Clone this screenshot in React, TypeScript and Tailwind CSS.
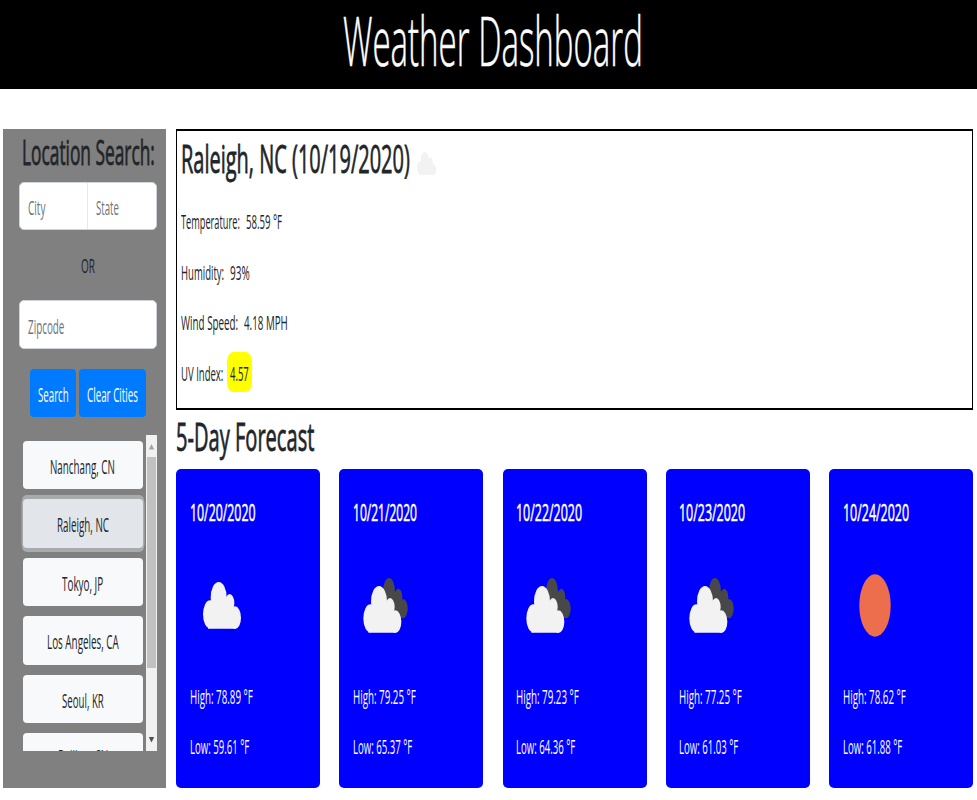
import { useLayoutEffect, useRef, useState } from "react";

type FitProps = { text: string; width: number; className?: string };

/** A single line of text condensed horizontally to a given width. */
function Fit({ text, width, className = "" }: FitProps) {
  const ref = useRef<HTMLSpanElement>(null);
  const [scale, setScale] = useState(0.6);
  useLayoutEffect(() => {
    if (ref.current) setScale(width / ref.current.offsetWidth);
  }, [text, width]);
  return (
    <span className={`block shrink-0 whitespace-pre ${className}`} style={{ width }}>
      <span ref={ref} className="inline-block origin-left align-top" style={{ transform: `scaleX(${scale})` }}>
        {text}
      </span>
    </span>
  );
}

function FrontCloud() {
  return (
    <g fill="#f2f2f2">
      <ellipse cx="60" cy="160" rx="21" ry="42" />
      <ellipse cx="86" cy="110" rx="24" ry="47" />
      <ellipse cx="119" cy="126" rx="14" ry="27" />
      <ellipse cx="135" cy="170" rx="18" ry="34" />
      <path d="M60 120H120V138L137 160V203H54Z" />
    </g>
  );
}

function Cloud({ className }: { className: string }) {
  return (
    <svg className={className} viewBox="39 63 114 141" preserveAspectRatio="none">
      <FrontCloud />
    </svg>
  );
}

function BrokenClouds() {
  return (
    <svg className="ml-[9.75px] mt-[13px] h-[55px] w-[45px]" viewBox="38 39 135 165" preserveAspectRatio="none">
      <g fill="#484848">
        <ellipse cx="116" cy="80" rx="18" ry="41" />
        <ellipse cx="144" cy="97" rx="12" ry="26" />
        <ellipse cx="158" cy="131" rx="14" ry="29" />
        <path d="M116 80H145V120H158V159L116 150Z" />
      </g>
      <FrontCloud />
    </svg>
  );
}

function Sun() {
  return (
    <svg className="ml-[16.5px] mt-[9px] h-[63px] w-[32px]" viewBox="0 0 32 63">
      <ellipse cx="16" cy="31.5" rx="15.7" ry="31.2" fill="#ec6e4c" />
    </svg>
  );
}

const cities = [
  { name: "Nanchang, CN", width: 65 },
  { name: "Raleigh, NC", width: 52, active: true },
  { name: "Tokyo, JP", width: 41 },
  { name: "Los Angeles, CA", width: 72 },
  { name: "Seoul, KR", width: 42 },
  { name: "Beijing, CN", width: 50, last: true },
];

const days = [
  { date: "10/20/2020", icon: "cloud", high: "78.89", low: "59.61", w: 65.5 },
  { date: "10/21/2020", icon: "broken", high: "79.25", low: "65.37", w: 64 },
  { date: "10/22/2020", icon: "broken", high: "79.23", low: "64.36", w: 66 },
  { date: "10/23/2020", icon: "broken", high: "77.25", low: "61.03", w: 66 },
  { date: "10/24/2020", icon: "sun", high: "78.62", low: "61.88", w: 66 },
];

function Sidebar() {
  return (
    <aside className="flex h-[658.5px] w-[163px] flex-col bg-[#808080]">
      <Fit
        text="Location Search:"
        width={133}
        className="ml-[18.5px] h-[53px] text-[34px] leading-[46px] [-webkit-text-stroke:0.8px_#212529]"
      />
      <div className="ml-4 flex h-12 w-[138px] overflow-hidden rounded-[5px] border border-[#ced4da] bg-white text-[#6c757d]">
        <div className="flex w-[68px] border-r border-[#e6e9ec] pl-[7.5px]">
          <Fit text="City" width={17.5} className="leading-[49px]" />
        </div>
        <div className="flex pl-2">
          <Fit text="State" width={23} className="leading-[49px]" />
        </div>
      </div>
      <Fit text="OR" width={14} className="ml-[78px] h-[70px] leading-[72px]" />
      <div className="ml-4 h-[49px] w-[138px] rounded-[5px] border border-[#ced4da] bg-white pl-[7.5px] text-[#6c757d]">
        <Fit text="Zipcode" width={36.5} className="leading-[52px]" />
      </div>
      <div className="ml-[26.5px] mt-[19.5px] flex gap-[3px] text-white">
        <button className="flex h-12 w-[46.5px] justify-center rounded-[4px] bg-[#007bff]">
          <Fit text="Search" width={30.5} className="leading-[51px]" />
        </button>
        <button className="flex h-12 w-[66.5px] justify-center rounded-[4px] bg-[#007bff]">
          <Fit text="Clear Cities" width={51} className="leading-[51px]" />
        </button>
      </div>
      <div className="ml-4 mt-[18.5px] flex h-[316px] w-[138px] justify-between overflow-hidden">
        <div className="flex flex-col gap-[10px] pl-[3.5px] pt-[6px]">
          {cities.map((c) => (
            <button
              key={c.name}
              className={`flex h-[48.4px] w-[120.5px] shrink-0 justify-center rounded-[4px] ${
                c.active ? "bg-[#e2e6ea] shadow-[0_0_0_1.5px_#a9aaab,0_3px_0_1px_#a9aaab,0_-3px_0_1px_#a9aaab]" : "bg-[#f8f9fa]"
              }`}
            >
              <Fit text={c.name} width={c.width} className={c.last ? "leading-[47px]" : "leading-[51px]"} />
            </button>
          ))}
        </div>
        <div className="flex w-[11px] flex-col items-center bg-[#f1f1f1]">
          <svg className="h-[21.5px] w-[11px]" viewBox="0 0 11 21.5">
            <path d="M2.8 14.5L5.5 9L8.2 14.5Z" fill="#a3a3a3" />
          </svg>
          <div className="h-[211px] w-[9px] bg-[#c1c1c1]" />
          <svg className="mt-[61px] h-[22px] w-[11px]" viewBox="0 0 11 22">
            <path d="M2.8 8L8.2 8L5.5 13.5Z" fill="#505050" />
          </svg>
        </div>
      </div>
    </aside>
  );
}

function Stat({ label, value, lw, vw, gap }: { label: string; value: string; lw: number; vw: number; gap: string }) {
  return (
    <div className={`flex h-[50.6px] leading-[52px] ${gap}`}>
      <Fit text={label} width={lw} />
      <Fit text={value} width={vw} />
    </div>
  );
}

export default function App() {
  return (
    <div className="h-[800px] w-[977px] bg-white font-['Open_Sans','Noto_Sans',sans-serif] text-[20px] text-[#212529]">
      <header className="flex h-[89px] justify-center bg-black pl-[8px] text-white">
        <Fit
          text="Weather Dashboard"
          width={300}
          className="text-[69px] font-light leading-[78px] [-webkit-text-stroke:0.6px_white]"
        />
      </header>
      <div className="flex gap-[10px] pl-[3px] pt-10">
        <Sidebar />
        <main className="w-[797px]">
          <section className="h-[281px] border-x border-y-2 border-black pl-[3.5px]">
            <div className="flex h-[65px]">
              <Fit
                text="Raleigh, NC (10/19/2020)"
                width={229}
                className="text-[39px] leading-[54px] [-webkit-text-stroke:0.8px_#212529]"
              />
              <Cloud className="ml-[7px] mt-[21px] h-[23px] w-[19px]" />
            </div>
            <Stat label="Temperature:" value="58.59 °F" lw={59} vw={36} gap="gap-[6px]" />
            <Stat label="Humidity:" value="93%" lw={43} vw={19.5} gap="gap-[6px]" />
            <Stat label="Wind Speed:" value="4.18 MPH" lw={57} vw={44} gap="gap-[6px]" />
            <div className="flex h-[50px] gap-[3.5px]">
              <Fit text="UV Index:" width={42.5} className="leading-[52px]" />
              <div className="mt-[4px] flex h-10 w-[25.5px] justify-center rounded-[6px/10px] bg-[yellow]">
                <Fit text="4.57" width={19} className="leading-[44px]" />
              </div>
            </div>
          </section>
          <Fit
            text="5-Day Forecast"
            width={138.5}
            className="h-[58.5px] text-[39px] leading-[51px] [-webkit-text-stroke:0.8px_#212529]"
          />
          <section className="flex justify-between">
            {days.map((d) => (
              <article key={d.date} className="h-[319px] w-[144px] rounded-[5px] bg-[#0000ff] pl-[13.5px] pt-[18px] text-white">
                <Fit text={d.date} width={d.w} className="text-[24.5px] leading-[50px] [-webkit-text-stroke:0.6px_white]" />
                <div className="h-[134px] pt-7">
                  {d.icon === "cloud" && <Cloud className="ml-[13.5px] mt-[17px] h-[47px] w-[38px]" />}
                  {d.icon === "broken" && <BrokenClouds />}
                  {d.icon === "sun" && <Sun />}
                </div>
                <Fit text={`High: ${d.high} °F`} width={62.5} className="h-[50.6px] leading-[52px]" />
                <Fit text={`Low: ${d.low} °F`} width={59.5} className="leading-[52px]" />
              </article>
            ))}
          </section>
        </main>
      </div>
    </div>
  );
}
